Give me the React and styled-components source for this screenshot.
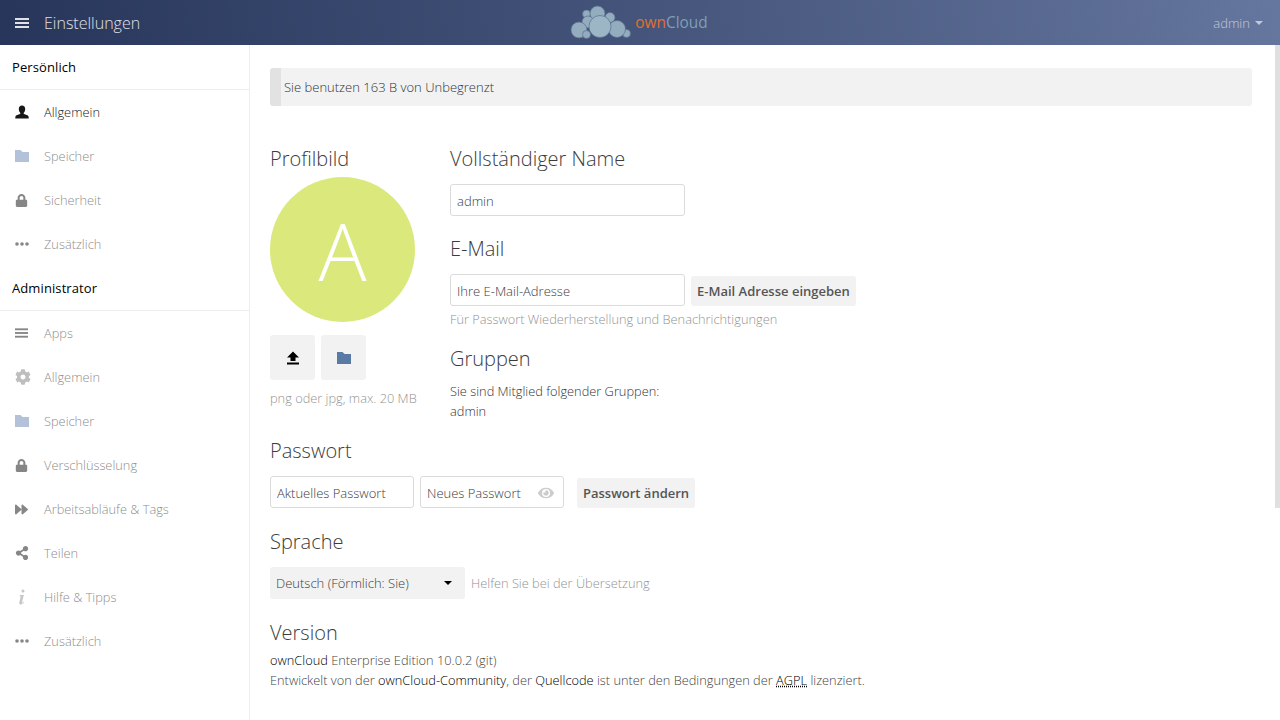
import React from 'react'
import styled, { createGlobalStyle } from 'styled-components'
import { FaLock, FaCog, FaForward, FaShareAlt, FaEye } from 'react-icons/fa'

const GlobalStyle = createGlobalStyle`
  html, body {
    margin: 0;
    height: 100%;
    overflow: hidden;
    background: #fff;
  }
  body {
    font-family: "Open Sans", "Liberation Sans", sans-serif;
    font-weight: 300;
    font-size: 13px;
    color: #000;
  }
  * { box-sizing: border-box; }
`

const Page = styled.div`
  width: 1280px;
  height: 720px;
  display: flex;
  flex-direction: column;
  overflow: hidden;
`

const Header = styled.header`
  flex: 0 0 45px;
  display: grid;
  grid-template-columns: 1fr auto 1fr;
  align-items: center;
  background: linear-gradient(80deg, #27355a 0%, #44547a 50%, #65769f 100%);
`

const HeaderLeft = styled.div`
  display: flex;
  align-items: center;
  gap: 15px;
  padding-left: 15px;
  color: #fff;
  opacity: 0.85;
`

const AppName = styled.span`
  font-size: 16px;
  font-weight: 300;
`

const Logo = styled.div`
  display: flex;
  align-items: center;
  gap: 3px;
  padding-right: 2px;
`

const LogoText = styled.span`
  font-size: 15.4px;
  color: #7f9fb6;
  margin-top: -1px;
  font-weight: 400;
  em {
    font-style: normal;
    color: #e0702f;
  }
`

const UserMenu = styled.div`
  justify-self: end;
  display: flex;
  align-items: center;
  gap: 5px;
  padding-right: 17px;
  color: #fff;
  opacity: 0.6;
`

const Caret = styled.span`
  width: 0;
  height: 0;
  border-left: 4px solid transparent;
  border-right: 4px solid transparent;
  border-top: 4px solid ${p => p.$color || '#fff'};
`

const Body = styled.div`
  flex: 1;
  display: flex;
  min-height: 0;
  position: relative;
`

const Sidebar = styled.nav`
  flex: 0 0 250px;
  border-right: 1px solid #eee;
`

const SideHeading = styled.h2`
  margin: 0;
  height: 45px;
  padding: 0 12px;
  display: flex;
  align-items: center;
  border-bottom: 1px solid #eee;
  font-size: 13px;
  font-weight: 400;
  letter-spacing: 0.1px;
  color: #000;
`

const SideList = styled.ul`
  list-style: none;
  margin: 0;
  padding: 0;
`

const SideItem = styled.li`
  height: 44px;
  display: flex;
  align-items: center;
  font-size: 12.8px;
  color: #000;
  opacity: ${p => p.$active ? 0.9 : 0.47};
`

const SideIcon = styled.span`
  width: 44px;
  padding-left: 15px;
  display: flex;
  align-items: center;
`

const Main = styled.main`
  flex: 1;
  min-width: 0;
  padding: 23px 28px 0 20px;
`

const Notice = styled.div`
  height: 38px;
  display: flex;
  align-items: center;
  padding-left: 3px;
  background: #f2f2f2;
  border-left: 11px solid #e2e2e2;
  border-radius: 3px;
  color: #333;
  font-size: 13px;
`

const Top = styled.div`
  display: flex;
  margin-top: 37px;
`

const ProfileCol = styled.section`
  width: 180px;
`

const InfoCol = styled.section`
  flex: 1;
`

const Heading = styled.h3`
  margin: 0;
  height: 32px;
  font-size: 20px;
  line-height: 32px;
  font-weight: 300;
  color: #3c3c3c;
`

const Avatar = styled.div`
  width: 145px;
  height: 145px;
  margin-top: 2px;
  border-radius: 50%;
  background: #dbe97c;
  color: #fff;
  display: flex;
  align-items: center;
  justify-content: center;
  font-size: 80px;
  font-weight: 300;
`

const AvatarButtons = styled.div`
  display: flex;
  gap: 6px;
  margin-top: 13px;
`

const IconButton = styled.button`
  width: 45px;
  height: 45px;
  padding: 0;
  border: 0;
  border-radius: 3px;
  background: #f2f2f2;
  display: flex;
  align-items: center;
  justify-content: center;
`

const Hint = styled.p`
  margin: ${p => p.$top || 0}px 0 0;
  color: #000;
  opacity: 0.45;
  font-size: 12.8px;
  line-height: 20px;
  white-space: nowrap;
`

const Field = styled.div`
  display: flex;
  align-items: flex-end;
  gap: 6px;
  margin-top: ${p => p.$top || 0}px;
`

const InputBox = styled.div`
  width: ${p => p.$w}px;
  height: 32px;
  padding: 1px 6px 0;
  display: flex;
  align-items: center;
  justify-content: space-between;
  background: #fff;
  border: 1px solid #dbdbdb;
  border-radius: 3px;
  font-size: 13px;
  font-weight: 300;
  color: #3c3c3c;
`

const EyeIcon = styled(FaEye)`
  margin-right: 3px;
  font-size: 16px;
  color: #ccc;
`

const ActionButton = styled.button`
  height: 30px;
  padding: 0 6px;
  margin-left: ${p => p.$left || 0}px;
  border: 0;
  border-radius: 3px;
  background: #f2f2f2;
  font-family: inherit;
  font-size: 13px;
  font-weight: 600;
  color: #555;
  white-space: nowrap;
`

const Section = styled.div`
  margin-top: ${p => p.$top || 0}px;
`

const GroupText = styled.p`
  margin: ${p => p.$top || 0}px 0 0;
  font-size: 12.8px;
  line-height: 20px;
  color: #333;
`

const Row = styled.div`
  display: flex;
  align-items: ${p => p.$center ? 'center' : 'flex-end'};
  gap: 6px;
  margin-top: ${p => p.$top || 0}px;
`

const SelectBox = styled.div`
  width: 195px;
  height: 32px;
  padding: 0 13px 0 6px;
  display: flex;
  align-items: center;
  justify-content: space-between;
  background: #f2f2f2;
  border-radius: 3px;
  color: #3c3c3c;
  font-size: 13px;
`

const VersionText = styled.p`
  margin: ${p => p.$top || 0}px 0 0;
  font-size: 12.8px;
  line-height: 20px;
  color: #444;
  white-space: nowrap;
  b {
    font-weight: 300;
    color: #000;
  }
`

const Agpl = styled.b`
  text-decoration: underline dotted;
`

const Scrollbar = styled.div`
  position: absolute;
  top: 0;
  right: 0;
  width: 5px;
  height: 463px;
  background: #e0e0e0;
`

const CloudLogo = () => (
  <svg width="62" height="40" viewBox="0 0 62 40">
    <g fill="#93adbf" stroke="#5a6d8c" strokeWidth="0.7">
      <circle cx="16.5" cy="11" r="4" />
      <circle cx="40" cy="14.5" r="5" />
      <circle cx="27.5" cy="10.5" r="7.5" />
      <circle cx="18" cy="19" r="6" />
      <circle cx="56.5" cy="30.5" r="4" />
      <circle cx="9" cy="27" r="8" />
      <circle cx="47" cy="26" r="8.5" />
      <circle cx="16.5" cy="31.5" r="4" />
      <circle cx="30" cy="23.5" r="11" fill="#9db6c6" />
    </g>
  </svg>
)

const MenuIcon = ({ color = '#fff', size = 14 }) => (
  <svg width={size} height="12" viewBox="0 0 14 12" fill={color}>
    <rect x="0" y="1" width="14" height="2" />
    <rect x="0" y="5" width="14" height="2" />
    <rect x="0" y="9" width="14" height="2" />
  </svg>
)

const DotsIcon = () => (
  <svg width="14" height="4" viewBox="0 0 14 4" fill="#000">
    <circle cx="2" cy="2" r="1.8" />
    <circle cx="7" cy="2" r="1.8" />
    <circle cx="12" cy="2" r="1.8" />
  </svg>
)

const FolderIcon = ({ color = '#a9bad2', size = 14 }) => (
  <svg width={size} height={size} viewBox="0 0 14 14" fill={color}>
    <path d="M0 1h5.5l2 2H14v10H0z" />
  </svg>
)

const UploadIcon = () => (
  <svg width="14" height="14" viewBox="0 0 14 14" fill="#000">
    <path d="M7 0.5l6 6H9.5v3.5h-5V6.5H1zM1 11.5h12V13.5H1z" />
  </svg>
)

const UserIcon = () => (
  <svg width="14" height="14" viewBox="0 0 14 14" fill="#000">
    <path d="M7 0.5c2 0 3.2 1.5 3.2 3.5 0 1.5-.6 3-1.4 3.8-.3.4-.2 1 .3 1.2l3.2 1.3c1 .4 1.4 1.2 1.4 2.2v1H.3v-1c0-1 .4-1.8 1.4-2.2l3.2-1.3c.5-.2.6-.8.3-1.2C4.4 7 3.8 5.5 3.8 4 3.8 2 5 .5 7 .5z" />
  </svg>
)

const InfoIcon = () => (
  <svg width="14" height="16" viewBox="0 0 14 16" fill="#888">
    <path d="M8 0.5a1.5 1.5 0 1 1 0 3 1.5 1.5 0 0 1 0-3zM4.8 6h4L7 13c-.1.5.3.7.7.4l1-.8.3.5C8 14.5 6.8 15.5 5.6 15.5c-1.2 0-1.6-.8-1.3-1.9L5.6 8c.1-.5-.1-.8-.9-.8z" />
  </svg>
)

const personal = [
  { label: 'Allgemein', icon: <UserIcon />, active: true },
  { label: 'Speicher', icon: <FolderIcon color="#5f7fae" /> },
  { label: 'Sicherheit', icon: <FaLock size={13} color="#000" /> },
  { label: 'Zusätzlich', icon: <DotsIcon /> },
]

const admin = [
  { label: 'Apps', icon: <MenuIcon color="#000" size={13} /> },
  { label: 'Allgemein', icon: <FaCog size={16} color="#777" /> },
  { label: 'Speicher', icon: <FolderIcon color="#5f7fae" /> },
  { label: 'Verschlüsselung', icon: <FaLock size={13} color="#000" /> },
  { label: 'Arbeitsabläufe & Tags', icon: <FaForward size={13} color="#000" /> },
  { label: 'Teilen', icon: <FaShareAlt size={14} color="#000" /> },
  { label: 'Hilfe & Tipps', icon: <InfoIcon /> },
  { label: 'Zusätzlich', icon: <DotsIcon /> },
]

const NavItems = ({ items }) => items.map(item => (
  <SideItem key={item.label} $active={item.active}>
    <SideIcon>{item.icon}</SideIcon>
    {item.label}
  </SideItem>
))

const App = () => (
  <Page>
    <GlobalStyle />
    <Header>
      <HeaderLeft>
        <MenuIcon />
        <AppName>Einstellungen</AppName>
      </HeaderLeft>
      <Logo>
        <CloudLogo />
        <LogoText><em>own</em>Cloud</LogoText>
      </Logo>
      <UserMenu>
        admin
        <Caret />
      </UserMenu>
    </Header>
    <Body>
      <Sidebar>
        <SideHeading>Persönlich</SideHeading>
        <SideList>
          <NavItems items={personal} />
        </SideList>
        <SideHeading>Administrator</SideHeading>
        <SideList>
          <NavItems items={admin} />
        </SideList>
      </Sidebar>
      <Main>
        <Notice>Sie benutzen 163 B von Unbegrenzt</Notice>
        <Top>
          <ProfileCol>
            <Heading>Profilbild</Heading>
            <Avatar>A</Avatar>
            <AvatarButtons>
              <IconButton><UploadIcon /></IconButton>
              <IconButton><FolderIcon color="#5a7aa6" /></IconButton>
            </AvatarButtons>
            <Hint $top={8}>png oder jpg, max. 20 MB</Hint>
          </ProfileCol>
          <InfoCol>
            <Heading>Vollständiger Name</Heading>
            <Field $top={9}>
              <InputBox $w={235}>admin</InputBox>
            </Field>
            <Section $top={17}>
              <Heading>E-Mail</Heading>
            </Section>
            <Field $top={9}>
              <InputBox $w={235}>Ihre E-Mail-Adresse</InputBox>
              <ActionButton>E-Mail Adresse eingeben</ActionButton>
            </Field>
            <Hint $top={3}>Für Passwort Wiederherstellung und Benachrichtigungen</Hint>
            <Section $top={14}>
              <Heading>Gruppen</Heading>
            </Section>
            <GroupText $top={6}>Sie sind Mitglied folgender Gruppen:</GroupText>
            <GroupText>admin</GroupText>
          </InfoCol>
        </Top>
        <Section $top={14}>
          <Heading>Passwort</Heading>
        </Section>
        <Row $top={9}>
          <InputBox $w={144}>Aktuelles Passwort</InputBox>
          <InputBox $w={144}>
            Neues Passwort
            <EyeIcon />
          </InputBox>
          <ActionButton $left={7}>Passwort ändern</ActionButton>
        </Row>
        <Section $top={18}>
          <Heading>Sprache</Heading>
        </Section>
        <Row $top={9} $center>
          <SelectBox>
            Deutsch (Förmlich: Sie)
            <Caret $color="#000" />
          </SelectBox>
          <Hint>Helfen Sie bei der Übersetzung</Hint>
        </Row>
        <Section $top={18}>
          <Heading>Version</Heading>
        </Section>
        <VersionText $top={1}><b>ownCloud</b> Enterprise Edition 10.0.2 (git)</VersionText>
        <VersionText>Entwickelt von der <b>ownCloud-Community</b>, der <b>Quellcode</b> ist unter den Bedingungen der <Agpl>AGPL</Agpl> lizenziert.</VersionText>
      </Main>
      <Scrollbar />
    </Body>
  </Page>
)

export default App
